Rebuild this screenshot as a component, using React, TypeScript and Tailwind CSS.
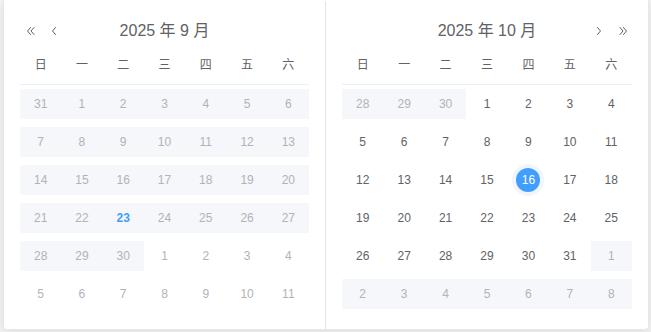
import React from "react";

type Kind = "off" | "other" | "normal" | "today" | "selected";
type Cell = { d: number; k: Kind };

const WEEK = ["日", "一", "二", "三", "四", "五", "六"];

// Sept 2025 — the whole month is outside the allowed range
const sept: Cell[] = [
  { d: 31, k: "off" },
  ...Array.from({ length: 30 }, (_, i): Cell => ({ d: i + 1, k: i + 1 === 23 ? "today" : "off" })),
  ...Array.from({ length: 11 }, (_, i): Cell => ({ d: i + 1, k: "other" })),
];

// Oct 2025 — only October itself can be picked
const oct: Cell[] = [
  ...[28, 29, 30].map((d): Cell => ({ d, k: "off" })),
  ...Array.from({ length: 31 }, (_, i): Cell => ({ d: i + 1, k: i + 1 === 16 ? "selected" : "normal" })),
  ...Array.from({ length: 8 }, (_, i): Cell => ({ d: i + 1, k: "off" })),
];

function Chevron({ dir, double }: { dir: "left" | "right"; double?: boolean }) {
  const flip = dir === "right" ? "scale(-1,1) translate(-10,0)" : undefined;
  return (
    <svg width="10" height="10" viewBox="0 0 10 10" fill="none" aria-hidden>
      <g transform={flip} stroke="#606266" strokeWidth="1" strokeLinejoin="round" strokeLinecap="round">
        {double ? (
          <>
            <path d="M4.5 1.5 L1.5 5 L4.5 8.5" />
            <path d="M8 1.5 L5 5 L8 8.5" />
          </>
        ) : (
          <path d="M6.5 1.5 L3.5 5 L6.5 8.5" />
        )}
      </g>
    </svg>
  );
}

function Day({ c }: { c: Cell }) {
  const box = "h-[30px] flex items-center justify-center";
  if (c.k === "selected") {
    return (
      <div className={box}>
        <div className="w-[32px] h-[32px] rounded-full bg-[#f2f6fc] flex items-center justify-center">
          <span className="w-6 h-6 rounded-full bg-[#409eff] text-white flex items-center justify-center">
            {c.d}
          </span>
        </div>
      </div>
    );
  }
  const cls =
    c.k === "off"
      ? "bg-[#f5f7fa] text-[#b1b3b8]"
      : c.k === "today"
        ? "bg-[#f5f7fa] text-[#409eff] font-bold"
        : c.k === "other"
          ? "text-[#b1b3b8]"
          : "text-[#606266]";
  return <div className={`${box} ${cls}`}>{c.d}</div>;
}

function Panel({ title, cells, side }: { title: string; cells: Cell[]; side: "left" | "right" }) {
  return (
    <div className={`w-1/2 p-4 ${side === "left" ? "border-r border-[#e4e4e4]" : ""}`}>
      <div className="h-7 grid grid-cols-[1fr_auto_1fr] items-center">
        <div className="flex items-center gap-[13px] pl-[6px]">
          {side === "left" && (
            <>
              <Chevron dir="left" double />
              <Chevron dir="left" />
            </>
          )}
        </div>
        <div className="text-base text-[#606266]">{title}</div>
        <div className="flex items-center justify-end gap-[14px] pr-[4px]">
          {side === "right" && (
            <>
              <Chevron dir="right" />
              <Chevron dir="right" double />
            </>
          )}
        </div>
      </div>
      <div className="grid grid-cols-7 h-10 items-center border-b border-[#ebeef5] text-xs text-[#606266] text-center">
        {WEEK.map((w) => (
          <div key={w}>{w}</div>
        ))}
      </div>
      <div className="grid grid-cols-7 text-xs">
        {cells.map((c, i) => (
          <div key={i} className="h-[38px] py-1">
            <Day c={c} />
          </div>
        ))}
      </div>
    </div>
  );
}

export default function App() {
  return (
    <div className="h-[332px] w-[651px] overflow-hidden bg-[#f4f4f5] font-['Liberation_Sans','Noto_Sans_CJK_SC',sans-serif]">
      <div className="ml-[3px] w-[646px] flex bg-white border border-t-white border-[#e4e7ed] rounded-b shadow-[0_2px_12px_0_rgba(0,0,0,0.1)]">
        <Panel title="2025 年 9 月" cells={sept} side="left" />
        <Panel title="2025 年 10 月" cells={oct} side="right" />
      </div>
    </div>
  );
}
